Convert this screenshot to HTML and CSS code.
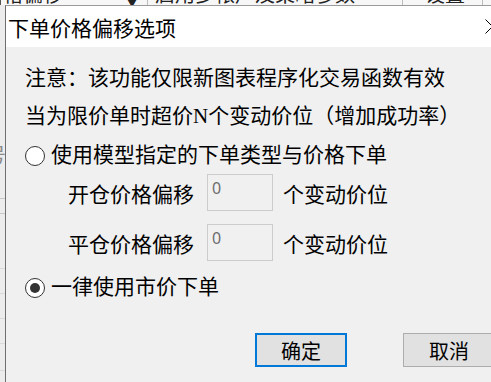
FILE: index.html
```html
<!DOCTYPE html>
<html lang="zh-CN">
<head>
<meta charset="utf-8">
<title>下单价格偏移选项</title>
<link rel="stylesheet" href="styles.css">
</head>
<body>
<div class="screen">
  <div class="topstrip">
    <div class="cell cell-a"><span class="frag">格偏移</span><span class="drop">▼</span></div>
    <div class="cell cell-b"><span class="frag">启用多帐户及策略参数</span></div>
    <div class="cell cell-c"><span class="frag">设置</span></div>
    <div class="cell cell-d"></div>
  </div>
  <div class="main">
    <div class="gutter"><span class="gfrag">号</span></div>
    <div class="dialog">
      <div class="titlebar">
        <span class="title">下单价格偏移选项</span>
        <svg class="close" width="15" height="15" viewBox="0 0 15 15"><path d="M0.5 0.5 L14.5 14.5 M14.5 0.5 L0.5 14.5" stroke="#000" stroke-width="1" fill="none"/></svg>
      </div>
      <div class="content">
        <p class="line">注意：该功能仅限新图表程序化交易函数有效</p>
        <p class="line">当为限价单时超价N个变动价位（增加成功率）</p>
        <div class="radio-row"><span class="radio"></span><span class="radio-label">使用模型指定的下单类型与价格下单</span></div>
        <div class="field-row"><span class="field-label">开仓价格偏移</span><span class="input">0</span><span class="unit">个变动价位</span></div>
        <div class="field-row second"><span class="field-label">平仓价格偏移</span><span class="input">0</span><span class="unit">个变动价位</span></div>
        <div class="radio-row last"><span class="radio checked"></span><span class="radio-label">一律使用市价下单</span></div>
        <div class="buttons">
          <div class="btn primary">确定</div>
          <div class="btn">取消</div>
        </div>
      </div>
    </div>
  </div>
</div>
</body>
</html>
```

FILE: styles.css
```css
html, body {
  margin: 0;
  padding: 0;
  overflow: hidden;
}
body {
  width: 491px;
  height: 382px;
  background: #f0f0f0;
  font-family: "Liberation Serif", "Noto Sans CJK SC", serif;
  color: #000;
}
.screen {
  width: 491px;
  height: 382px;
  overflow: hidden;
  display: flex;
  flex-direction: column;
}
.topstrip {
  height: 5px;
  flex: none;
  display: flex;
  overflow: hidden;
  background: #f7f7f7;
}
.cell {
  flex: none;
  height: 5px;
  overflow: hidden;
  border-right: 1px solid #bdbdbd;
  box-sizing: border-box;
  font-family: "Noto Sans CJK SC", sans-serif;
  font-size: 20px;
  line-height: 20px;
  color: #222;
  white-space: nowrap;
}
.cell-a { width: 148px; border-left: 1px solid #555; padding-left: 2px; }
.cell-b { width: 255px; padding-left: 7px; }
.cell-c { width: 80px; padding-left: 22px; }
.cell-d { width: 20px; border-right: none; }
.frag, .drop {
  display: inline-block;
  margin-top: -16px;
  vertical-align: top;
}
.drop {
  font-size: 14px;
  margin-left: 62px;
  margin-top: -10px;
}
.main {
  flex: 1;
  display: flex;
  min-height: 0;
}
.gutter {
  width: 5px;
  flex: none;
  overflow: hidden;
  background:
    linear-gradient(#c8c8c8, #c8c8c8) 0 193px / 5px 1px no-repeat,
    linear-gradient(#c8c8c8, #c8c8c8) 0 208px / 5px 1px no-repeat,
    linear-gradient(#dadada, #dadada) 0 263px / 5px 1px no-repeat,
    linear-gradient(#dadada, #dadada) 0 288px / 5px 1px no-repeat,
    linear-gradient(#dadada, #dadada) 0 313px / 5px 1px no-repeat,
    linear-gradient(#dadada, #dadada) 0 338px / 5px 1px no-repeat,
    linear-gradient(#dadada, #dadada) 0 365px / 5px 1px no-repeat,
    #ececec;
}
.gfrag {
  display: block;
  margin: 140px 0 0 -14px;
  font-family: "Noto Sans CJK SC", sans-serif;
  font-size: 20px;
  line-height: 20px;
  color: #8a8a8a;
}
.dialog {
  flex: none;
  width: 504px;
  border-left: 1px solid #6f6f6f;
  border-top: 1px solid #9a9a9a;
  background: #f0f0f0;
  display: flex;
  flex-direction: column;
}
.titlebar {
  height: 41px;
  background: #ffffff;
  display: flex;
  align-items: center;
  padding-left: 2px;
  padding-right: 10px;
}
.title {
  font-family: "Noto Sans CJK SC", sans-serif;
  font-size: 21px;
  line-height: 28px;
}
.close {
  margin-left: auto;
  display: block;
}
.content {
  padding: 12px 15px 0 19px;
  font-size: 21px;
}
.line {
  margin: 0;
  height: 38px;
  line-height: 38px;
  white-space: nowrap;
}
.radio-row {
  margin-top: 2px;
  height: 37px;
  display: flex;
  align-items: center;
  white-space: nowrap;
}
.radio-row.last {
  margin-top: 8px;
}
.radio {
  width: 20px;
  height: 20px;
  box-sizing: border-box;
  border: 1.5px solid #333;
  border-radius: 50%;
  background: #fff;
  display: flex;
  align-items: center;
  justify-content: center;
  flex: none;
}
.radio.checked::after {
  content: "";
  width: 10px;
  height: 10px;
  border-radius: 50%;
  background: #333;
}
.radio-label {
  margin-left: 6px;
  line-height: 37px;
}
.field-row {
  height: 37px;
  display: flex;
  align-items: center;
  padding-left: 43px;
  white-space: nowrap;
}
.field-row.second {
  margin-top: 13px;
}
.field-label {
  width: 126px;
  flex: none;
}
.input {
  margin-left: 13px;
  width: 66px;
  height: 37px;
  box-sizing: border-box;
  border: 1px solid #cccccc;
  background: #f0f0f0;
  color: #6d6d6d;
  font-family: "Noto Sans", sans-serif;
  font-size: 16px;
  line-height: 22px;
  padding: 2px 4px;
  align-self: flex-start;
  flex: none;
}
.unit {
  margin-left: 10px;
}
.buttons {
  margin-top: 27px;
  display: flex;
  justify-content: flex-end;
  gap: 56px;
}
.btn {
  width: 92px;
  height: 34px;
  box-sizing: border-box;
  border: 1px solid #adadad;
  background: #e1e1e1;
  display: flex;
  align-items: center;
  justify-content: center;
  font-family: "Noto Sans CJK SC", sans-serif;
  font-size: 20px;
  flex: none;
}
.btn.primary {
  border: 2px solid #0078d7;
}
```
